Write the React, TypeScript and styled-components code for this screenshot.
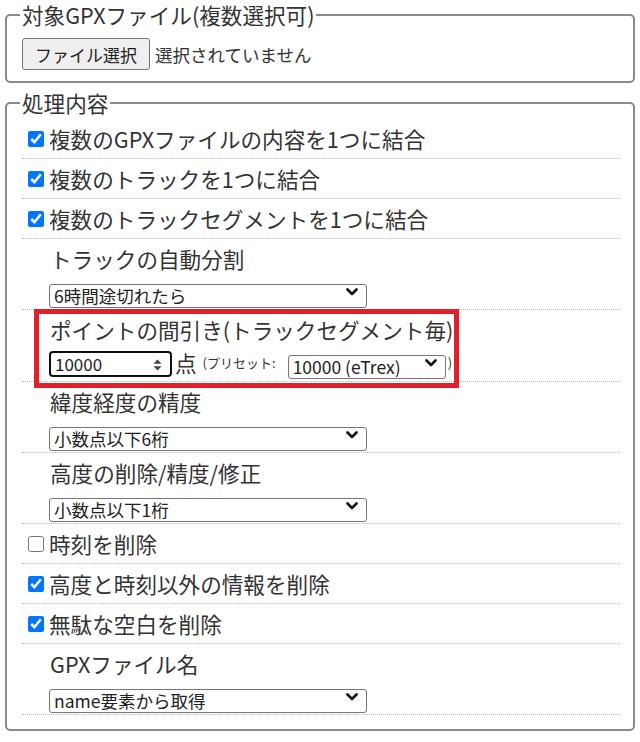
import styled, { createGlobalStyle } from 'styled-components'

const GlobalStyle = createGlobalStyle`
  body {
    margin: 0;
    background: #fff;
    color: #333;
    font-family: "Noto Sans CJK JP", "Noto Sans", sans-serif;
  }
  * { box-sizing: border-box; }
`

const Page = styled.div`
  padding: 0 5px;
  width: 640px;
`

const Fieldset = styled.fieldset`
  margin: 0 0 5px;
  border: 2px solid #8a8a8a;
  border-radius: 5px;
  padding: 9px 13px 11px 15px;
  min-inline-size: 0;
`

const MainFieldset = styled(Fieldset)`
  padding: 2px 13px 14px 15px;
`

const Legend = styled.legend`
  font-size: 21.6px;
  line-height: 29px;
  padding: 0 2px;
  margin-left: -2px;
  color: #333;
`

const FileLine = styled.div`
  display: flex;
  align-items: center;
  gap: 5px;
  font-size: 17.5px;
`

const FileButton = styled.button`
  height: 32px;
  padding: 0 12px;
  font-family: inherit;
  font-size: 17px;
  color: #222;
  background: #efefef;
  border: 1px solid #767676;
  border-radius: 3px;
`

const Row = styled.div`
  border-bottom: 1px dotted #bdbdbd;
  padding: 6px 0 5px;
  font-size: 21.6px;
  line-height: 28px;
`

const CheckLabel = styled.label`
  display: flex;
  align-items: center;
`

const Check = styled.input`
  width: 16px;
  height: 16px;
  margin: 0 5px 0 6px;
  accent-color: #0075ff;
`

const FieldRow = styled(Row)`
  padding-left: 28px;
`

const FieldLabel = styled.div`
  color: #333;
`

const Controls = styled.div`
  display: flex;
  align-items: center;
  margin: 7px 0 0 -1px;
  height: 24px;
`

const SelectWrap = styled.div<{ $width: number }>`
  position: relative;
  width: ${(p) => p.$width}px;
  height: 24px;

  svg {
    position: absolute;
    right: 9px;
    top: 50%;
    transform: translateY(-50%);
    pointer-events: none;
  }
`

const Select = styled.select`
  appearance: none;
  width: 100%;
  height: 24px;
  padding: 0 4px;
  font-family: inherit;
  font-size: 17.5px;
  line-height: 1.2;
  color: #222;
  background: #fff;
  border: 1px solid #767676;
  border-radius: 3px;
`

const Highlight = styled.div`
  position: relative;
  display: inline-block;

  &::after {
    content: '';
    position: absolute;
    inset: -7px -6px -13px -16px;
    border: 5px solid #e2202a;
    pointer-events: none;
  }
`

const NumberBox = styled.div`
  position: relative;
  width: 123px;
  height: 26px;
  margin-top: 1px;
  border: 2px solid #101010;
  border-radius: 4px;
  display: flex;
  align-items: center;

  input {
    width: 100%;
    border: none;
    outline: none;
    padding: 0 4px;
    font-family: inherit;
    font-size: 17px;
    color: #222;
    background: transparent;
  }

  svg {
    position: absolute;
    right: 7px;
    top: 5px;
  }
`

const Unit = styled.span`
  font-size: 21.6px;
  margin: 0 6px 0 3px;
`

const Small = styled.span`
  font-size: 13px;
  margin-right: 12px;
  color: #333;
`

const Paren = styled.span`
  font-size: 13px;
  margin-left: 2px;
`

function Chevron() {
  return (
    <svg width="12" height="8" viewBox="0 0 12 8">
      <path d="M1.5 1.5 L6 6 L10.5 1.5" fill="none" stroke="#111" strokeWidth="2.6" strokeLinecap="round" strokeLinejoin="round" />
    </svg>
  )
}

function Spinner() {
  return (
    <svg width="11" height="14" viewBox="0 0 11 14">
      <path d="M1.5 5.8 L5.5 1.5 L9.5 5.8 Z" fill="#444" />
      <path d="M1.5 8.2 L5.5 12.5 L9.5 8.2 Z" fill="#444" />
    </svg>
  )
}

function Dropdown({ value, width = 318 }: { value: string; width?: number }) {
  return (
    <SelectWrap $width={width}>
      <Select defaultValue={value}>
        <option>{value}</option>
      </Select>
      <Chevron />
    </SelectWrap>
  )
}

function CheckRow({ label, checked }: { label: string; checked: boolean }) {
  return (
    <Row>
      <CheckLabel>
        <Check type="checkbox" defaultChecked={checked} />
        {label}
      </CheckLabel>
    </Row>
  )
}

function SelectRow({ label, value }: { label: string; value: string }) {
  return (
    <FieldRow>
      <FieldLabel>{label}</FieldLabel>
      <Controls>
        <Dropdown value={value} />
      </Controls>
    </FieldRow>
  )
}

export default function App() {
  return (
    <Page>
      <GlobalStyle />
      <Fieldset>
        <Legend>対象GPXファイル(複数選択可)</Legend>
        <FileLine>
          <FileButton>ファイル選択</FileButton>
          <span>選択されていません</span>
        </FileLine>
      </Fieldset>

      <MainFieldset>
        <Legend>処理内容</Legend>
        <CheckRow label="複数のGPXファイルの内容を1つに結合" checked />
        <CheckRow label="複数のトラックを1つに結合" checked />
        <CheckRow label="複数のトラックセグメントを1つに結合" checked />
        <SelectRow label="トラックの自動分割" value="6時間途切れたら" />
        <FieldRow>
          <Highlight>
            <FieldLabel>ポイントの間引き(トラックセグメント毎)</FieldLabel>
            <Controls>
              <NumberBox>
                <input type="text" defaultValue="10000" />
                <Spinner />
              </NumberBox>
              <Unit>点</Unit>
              <Small>(プリセット:</Small>
              <Dropdown value="10000 (eTrex)" width={158} />
              <Paren>)</Paren>
            </Controls>
          </Highlight>
        </FieldRow>
        <SelectRow label="緯度経度の精度" value="小数点以下6桁" />
        <SelectRow label="高度の削除/精度/修正" value="小数点以下1桁" />
        <CheckRow label="時刻を削除" checked={false} />
        <CheckRow label="高度と時刻以外の情報を削除" checked />
        <CheckRow label="無駄な空白を削除" checked />
        <SelectRow label="GPXファイル名" value="name要素から取得" />
      </MainFieldset>
    </Page>
  )
}
